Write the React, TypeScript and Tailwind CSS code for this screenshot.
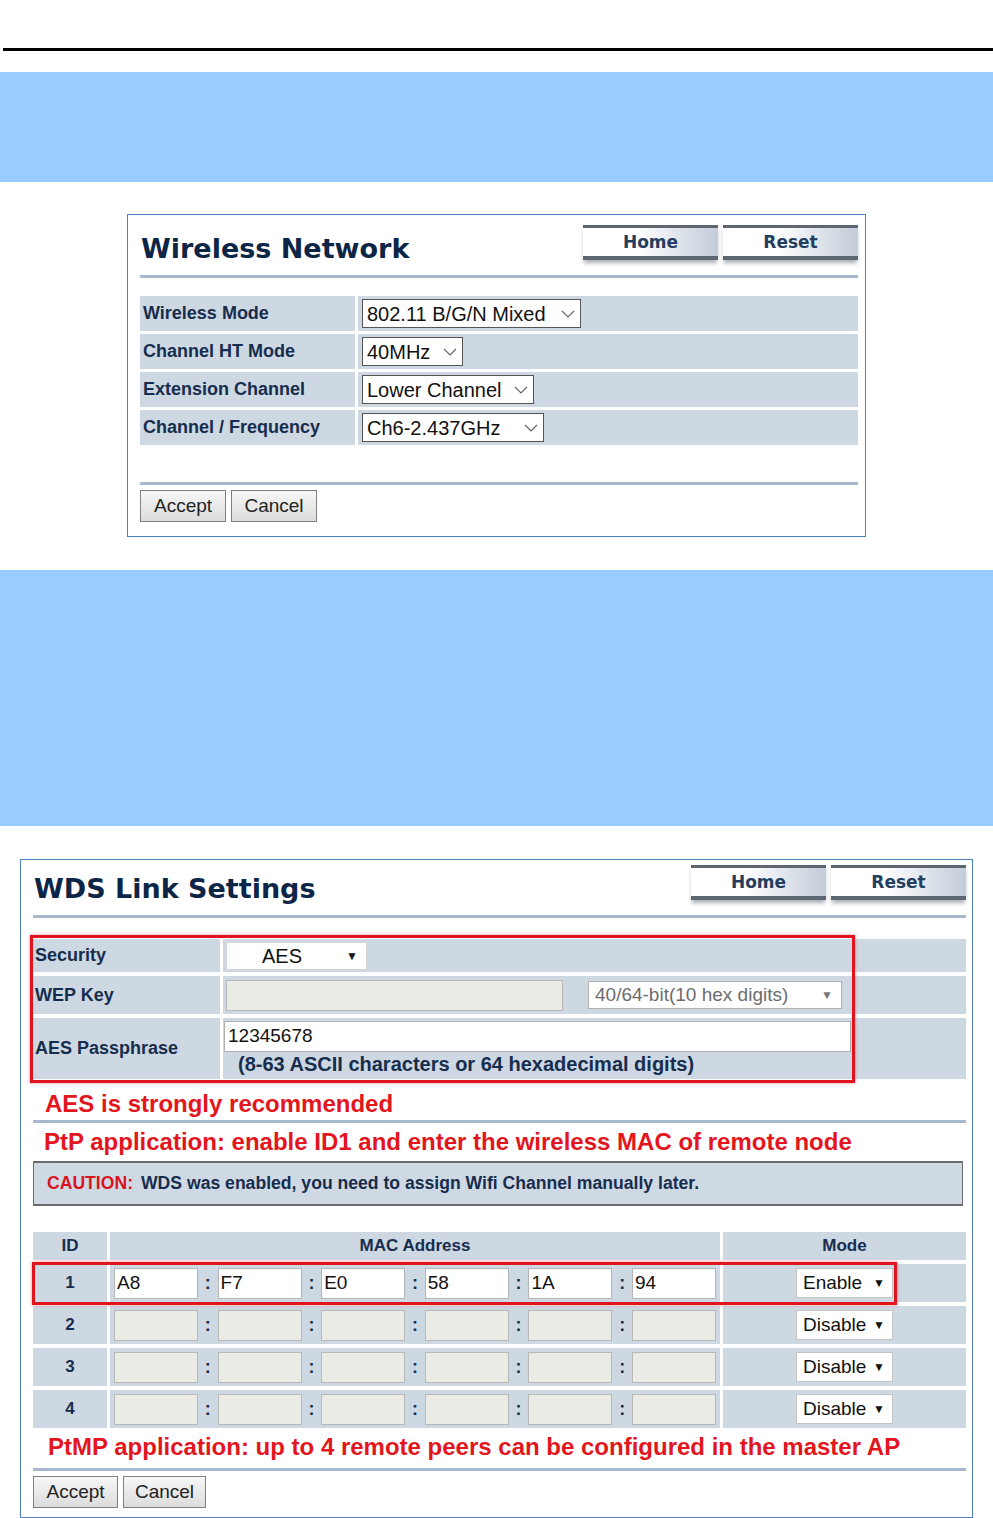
import React from 'react';

const navy = 'text-[#172d4d]';

function TabButton({ label }: { label: string }) {
  return (
    <div className="w-[135px] h-[35px] flex flex-col shadow-[0_4px_4px_-1px_rgba(60,70,90,0.45)]">
      <div className="h-[4px] bg-[#5e6672]" />
      <div className="flex-1 bg-gradient-to-r from-white from-40% to-[#c3ccd9] flex items-center justify-center">
        <span className="mt-[2px] font-['DejaVu_Sans',Verdana,sans-serif] font-bold text-[17px] text-[#263e5e]">{label}</span>
      </div>
      <div className="h-[5px] bg-[#5e6672]" />
    </div>
  );
}

function Chevron() {
  return (
    <svg width="14" height="8" viewBox="0 0 14 8">
      <path d="M1 1 L7 7 L13 1" stroke="#666" strokeWidth="1.2" fill="none" />
    </svg>
  );
}

function PlainButton({ label, className }: { label: string; className: string }) {
  return (
    <div
      className={
        'h-[32px] border border-[#7f7f7f] bg-gradient-to-b from-[#f7f7f7] to-[#dcdcdc] flex items-center justify-center text-[19px] text-[#222] ' +
        className
      }
    >
      {label}
    </div>
  );
}

const wirelessRows = [
  { label: 'Wireless Mode', value: '802.11 B/G/N Mixed', w: 'w-[219px]' },
  { label: 'Channel HT Mode', value: '40MHz', w: 'w-[101px]' },
  { label: 'Extension Channel', value: 'Lower Channel', w: 'w-[172px]' },
  { label: 'Channel / Frequency', value: 'Ch6-2.437GHz', w: 'w-[182px]' },
];

function WirelessPanel() {
  return (
    <div className="ml-[127px] mt-[32px] w-[739px] h-[323px] border border-[#4f7fbf] pl-[12px] pr-[7px] pt-[10px]">
      <div className="flex justify-between items-start h-[35px]">
        <div className="ml-[1px] mt-[9px] leading-[30px] font-['DejaVu_Sans',Verdana,sans-serif] font-bold text-[27px] text-[#0d2647]">
          Wireless Network
        </div>
        <div className="flex gap-[5px]">
          <TabButton label="Home" />
          <TabButton label="Reset" />
        </div>
      </div>
      <div className="mt-[15px] h-[3px] bg-[#a7b8cc]" />

      <div className="mt-[18px] flex flex-col gap-[3px]">
        {wirelessRows.map((r) => (
          <div key={r.label} className="flex h-[35px] gap-[3px]">
            <div className={'w-[215px] bg-[#cdd8e3] flex items-center pl-[3px] text-[18px] font-bold ' + navy}>
              {r.label}
            </div>
            <div className="flex-1 bg-[#cdd8e3] flex items-center pl-[4px]">
              <div
                className={
                  'h-[29px] bg-white border border-[#555] flex items-center justify-between pl-[4px] pr-[5px] text-[20px] text-[#111] ' +
                  r.w
                }
              >
                <span>{r.value}</span>
                <Chevron />
              </div>
            </div>
          </div>
        ))}
      </div>

      <div className="mt-[37px] h-[3px] bg-[#a7b8cc]" />
      <div className="mt-[5px] flex gap-[5px]">
        <PlainButton label="Accept" className="w-[86px]" />
        <PlainButton label="Cancel" className="w-[86px]" />
      </div>
    </div>
  );
}

function MacRow({ id, values, enabled }: { id: number; values: string[]; enabled: boolean }) {
  return (
    <div className="flex h-[38px] gap-[3px]">
      <div className={'w-[74px] bg-[#cdd8e3] flex items-center justify-center text-[17px] font-bold ' + navy}>{id}</div>
      <div className="w-[610px] bg-[#cdd8e3] flex items-center pl-[4px]">
        {values.map((v, i) => (
          <React.Fragment key={i}>
            {i > 0 && (
              <span className={'w-[19.6px] text-center text-[18px] font-bold ' + navy}>:</span>
            )}
            <div
              className={
                'w-[84px] h-[31px] border flex items-center pl-[2px] text-[19px] text-[#111] ' +
                (enabled ? 'bg-white border-[#b5b5b5]' : 'bg-[#ebebe5] border-[#b8b8b8]')
              }
            >
              {v}
            </div>
          </React.Fragment>
        ))}
      </div>
      <div className="flex-1 bg-[#cdd8e3] flex items-center justify-center">
        <div className="w-[97px] h-[30px] bg-white border border-[#c4c4c4] flex items-center pl-[6px] pr-[7px] text-[19px] text-[#111]">
          <span>{enabled ? 'Enable' : 'Disable'}</span>
          <span className="ml-auto text-[12px]">▼</span>
        </div>
      </div>
    </div>
  );
}

function WdsPanel() {
  const labelCell = 'w-[187px] bg-[#cdd8e3] flex items-center pl-[2px] text-[18px] font-bold ' + navy;
  const red = 'text-[#e3151d]';
  return (
    <div className="ml-[20px] mt-[33px] w-[953px] h-[659px] border border-[#4f7fbf] pl-[12px] pr-[6px] pt-[5px]">
      <div className="flex justify-between items-start h-[35px]">
        <div className="ml-[1px] mt-[9px] leading-[30px] font-['DejaVu_Sans',Verdana,sans-serif] font-bold text-[27px] text-[#0d2647]">
          WDS Link Settings
        </div>
        <div className="flex gap-[5px]">
          <TabButton label="Home" />
          <TabButton label="Reset" />
        </div>
      </div>
      <div className="mt-[15px] h-[3px] bg-[#a7b8cc]" />

      <div className="relative mt-[21px] flex flex-col gap-[4px]">
        <div className="flex h-[33px] gap-[3px]">
          <div className={labelCell}>Security</div>
          <div className="flex-1 bg-[#cdd8e3] flex items-center pl-[3px]">
            <div className="w-[141px] h-[28px] bg-white border border-[#d4d4d4] flex items-center text-[20px] text-[#111]">
              <span className="ml-[35px]">AES</span>
              <span className="ml-auto mr-[8px] text-[12px]">▼</span>
            </div>
          </div>
        </div>
        <div className="flex h-[38px] gap-[3px]">
          <div className={labelCell}>WEP Key</div>
          <div className="flex-1 bg-[#cdd8e3] flex items-center pl-[3px]">
            <div className="w-[337px] h-[31px] bg-[#ebebe5] border border-[#b7b7b7]" />
            <div className="ml-[25px] w-[254px] h-[28px] bg-white border border-[#b0b0b0] flex items-center pl-[6px] text-[19px] text-[#6d6d6d]">
              <span>40/64-bit(10 hex digits)</span>
              <span className="ml-auto mr-[8px] text-[12px] text-[#777]">▼</span>
            </div>
          </div>
        </div>
        <div className="flex h-[61px] gap-[3px]">
          <div className={labelCell}>AES Passphrase</div>
          <div className="flex-1 bg-[#cdd8e3] flex flex-col pl-[1px]">
            <div className="mt-[3px] w-[627px] h-[31px] bg-white border border-[#b0b0b0] flex items-center pl-[3px] text-[19px] text-[#111]">
              12345678
            </div>
            <div className={'mt-[1px] ml-[14px] leading-[22px] text-[20px] font-bold ' + navy}>
              (8-63 ASCII characters or 64 hexadecimal digits)
            </div>
          </div>
        </div>
        <div className="absolute left-[-3px] top-[-4px] w-[825px] h-[148px] border-[3px] border-[#e0141e] shadow-[0_0_3px_rgba(224,20,30,0.5)]" />
      </div>

      <div className={'mt-[11px] ml-[12px] leading-[28px] text-[24px] font-bold ' + red}>AES is strongly recommended</div>
      <div className="mt-[2px] h-[3px] bg-[#a7b8cc]" />
      <div className={'mt-[5px] ml-[11px] leading-[28px] text-[24px] font-bold ' + red}>
        PtP application: enable ID1 and enter the wireless MAC of remote node
      </div>

      <div className="mt-[5px] w-[930px] h-[45px] bg-[#cfd9e4] border-x border-y-[2px] border-[#6b6b6b] flex items-center pl-[13px] text-[17.6px] font-bold">
        <span className="text-[#d9141c]">CAUTION:</span>
        <span className={'ml-[8px] ' + navy}>WDS was enabled, you need to assign Wifi Channel manually later.</span>
      </div>

      <div className="mt-[26px] flex flex-col gap-[4px]">
        <div className={'flex h-[28px] gap-[3px] text-[17px] font-bold ' + navy}>
          <div className="w-[74px] bg-[#cdd8e3] flex items-center justify-center">ID</div>
          <div className="w-[610px] bg-[#cdd8e3] flex items-center justify-center">MAC Address</div>
          <div className="flex-1 bg-[#cdd8e3] flex items-center justify-center">Mode</div>
        </div>
        <div className="relative">
          <MacRow id={1} values={['A8', 'F7', 'E0', '58', '1A', '94']} enabled />
          <div className="absolute left-[-1px] top-[-2px] w-[865px] h-[43px] border-[3px] border-[#e0141e] shadow-[0_0_3px_rgba(224,20,30,0.5)]" />
        </div>
        <MacRow id={2} values={['', '', '', '', '', '']} enabled={false} />
        <MacRow id={3} values={['', '', '', '', '', '']} enabled={false} />
        <MacRow id={4} values={['', '', '', '', '', '']} enabled={false} />
      </div>

      <div className={'mt-[5px] ml-[15px] leading-[28px] text-[24px] font-bold ' + red}>
        PtMP application: up to 4 remote peers can be configured in the master AP
      </div>
      <div className="mt-[7px] h-[3px] bg-[#a7b8cc]" />
      <div className="mt-[5px] flex gap-[5px]">
        <PlainButton label="Accept" className="w-[85px]" />
        <PlainButton label="Cancel" className="w-[83px]" />
      </div>
    </div>
  );
}

export default function App() {
  return (
    <div className="w-[993px] h-[1518px] bg-white overflow-hidden font-['Liberation_Sans',Arial,sans-serif]">
      <div className="h-[48px]" />
      <div className="ml-[3px] h-[3px] bg-black" />
      <div className="mt-[21px] h-[110px] bg-[#99ccff]" />
      <WirelessPanel />
      <div className="mt-[33px] h-[256px] bg-[#99ccff]" />
      <WdsPanel />
    </div>
  );
}
